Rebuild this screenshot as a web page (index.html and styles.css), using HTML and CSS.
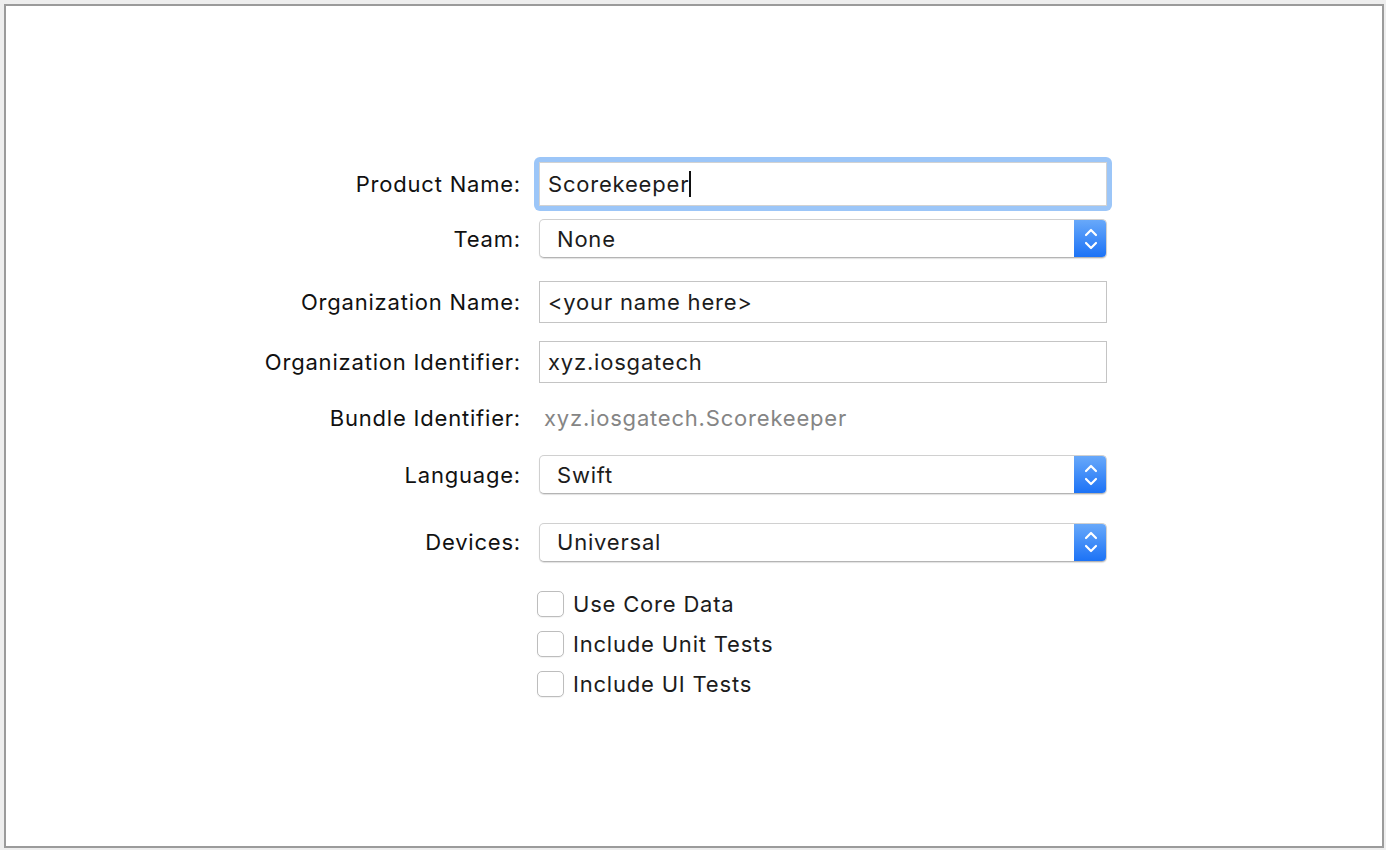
FILE: index.html
```html
<!DOCTYPE html>
<html lang="en">
<head>
    <meta charset="UTF-8">
    <meta name="viewport" content="width=device-width, initial-scale=1.0">
    <title>Choose options for your new project</title>
    <link rel="stylesheet" href="styles.css">
</head>
<body>
    <div class="sheet">
        <div class="form">
            <div class="row row-product">
                <label class="label">Product Name:</label>
                <div class="focus-ring">
                    <div class="field">Scorekeeper<span class="caret"></span></div>
                </div>
            </div>

            <div class="row row-team">
                <label class="label">Team:</label>
                <div class="popup">
                    <span class="popup-value">None</span>
                    <span class="stepper">
                        <svg width="14" height="26" viewBox="0 0 14 26"><path d="M2 9 L7 4 L12 9 M2 17 L7 22 L12 17" fill="none" stroke="#fff" stroke-width="2.2" stroke-linecap="round" stroke-linejoin="round"/></svg>
                    </span>
                </div>
            </div>

            <div class="row row-org">
                <label class="label">Organization Name:</label>
                <div class="field">&lt;your name here&gt;</div>
            </div>

            <div class="row row-orgid">
                <label class="label">Organization Identifier:</label>
                <div class="field">xyz.iosgatech</div>
            </div>

            <div class="row row-bundle">
                <label class="label">Bundle Identifier:</label>
                <div class="static">xyz.iosgatech.Scorekeeper</div>
            </div>

            <div class="row row-language">
                <label class="label">Language:</label>
                <div class="popup">
                    <span class="popup-value">Swift</span>
                    <span class="stepper">
                        <svg width="14" height="26" viewBox="0 0 14 26"><path d="M2 9 L7 4 L12 9 M2 17 L7 22 L12 17" fill="none" stroke="#fff" stroke-width="2.2" stroke-linecap="round" stroke-linejoin="round"/></svg>
                    </span>
                </div>
            </div>

            <div class="row row-devices">
                <label class="label">Devices:</label>
                <div class="popup">
                    <span class="popup-value">Universal</span>
                    <span class="stepper">
                        <svg width="14" height="26" viewBox="0 0 14 26"><path d="M2 9 L7 4 L12 9 M2 17 L7 22 L12 17" fill="none" stroke="#fff" stroke-width="2.2" stroke-linecap="round" stroke-linejoin="round"/></svg>
                    </span>
                </div>
            </div>

            <div class="checks">
                <div class="check"><span class="box"></span>Use Core Data</div>
                <div class="check"><span class="box"></span>Include Unit Tests</div>
                <div class="check"><span class="box"></span>Include UI Tests</div>
            </div>
        </div>
    </div>
</body>
</html>
```

FILE: styles.css
```css
body {
    margin: 0;
    padding: 4px 2px 2px 4px;
    background-color: #eeeeee;
    font-family: Inter, "Liberation Sans", Arial, sans-serif;
    font-size: 22px;
    letter-spacing: 0.8px;
    color: #111;
}
.sheet {
    height: 844px;
    box-sizing: border-box;
    border: 2px solid #9b9b9b;
    background-color: #fff;
    padding-top: 151px;
}
.form {
    display: flex;
    flex-direction: column;
}
.row {
    display: grid;
    grid-template-columns: 515px 568px;
    column-gap: 18px;
    align-items: center;
}
.label {
    text-align: right;
    color: #111;
}
.row-product {
    height: 54px;
}
.row-team {
    height: 39px;
    margin-top: 8px;
}
.row-org {
    height: 42px;
    margin-top: 23px;
}
.row-orgid {
    height: 42px;
    margin-top: 18px;
}
.row-bundle {
    height: 42px;
    margin-top: 14px;
}
.row-language {
    height: 39px;
    margin-top: 16px;
}
.row-devices {
    height: 40px;
    margin-top: 28px;
}
.focus-ring {
    margin-left: -5px;
    width: 578px;
    height: 54px;
    box-sizing: border-box;
    padding: 5px;
    border-radius: 6px;
    background-color: #9cc6f8;
}
.field {
    height: 42px;
    box-sizing: border-box;
    border: 1px solid #c4c4c4;
    background-color: #fff;
    padding-left: 8px;
    display: flex;
    align-items: center;
    color: #1c1c1c;
}
.focus-ring .field {
    height: 44px;
    border-color: #d2d2d2;
}
.caret {
    display: inline-block;
    width: 2px;
    height: 26px;
    background-color: #111;
    margin-left: 0;
}
.static {
    color: #858585;
    padding-left: 5px;
}
.popup {
    height: 39px;
    box-sizing: border-box;
    border: 1px solid #d0d0d0;
    border-bottom-color: #b4b4b4;
    border-radius: 5px;
    background-color: #fff;
    box-shadow: 0 1px 1px rgba(0, 0, 0, 0.12);
    display: flex;
    align-items: center;
    overflow: hidden;
}
.popup-value {
    flex: 1;
    padding-left: 17px;
    color: #1c1c1c;
}
.stepper {
    width: 33px;
    align-self: stretch;
    margin: -1px -1px -1px 0;
    background: linear-gradient(#6aaafa, #1a71f6);
    display: flex;
    align-items: center;
    justify-content: center;
}
.checks {
    margin-top: 22px;
    padding-left: 531px;
    display: flex;
    flex-direction: column;
}
.check {
    height: 40px;
    display: flex;
    align-items: center;
    color: #1c1c1c;
}
.box {
    width: 27px;
    height: 26px;
    box-sizing: border-box;
    border: 1px solid #bdbdbd;
    border-radius: 5px;
    background-color: #fff;
    box-shadow: 0 1px 1px rgba(0, 0, 0, 0.06);
    margin-right: 9px;
}
```
